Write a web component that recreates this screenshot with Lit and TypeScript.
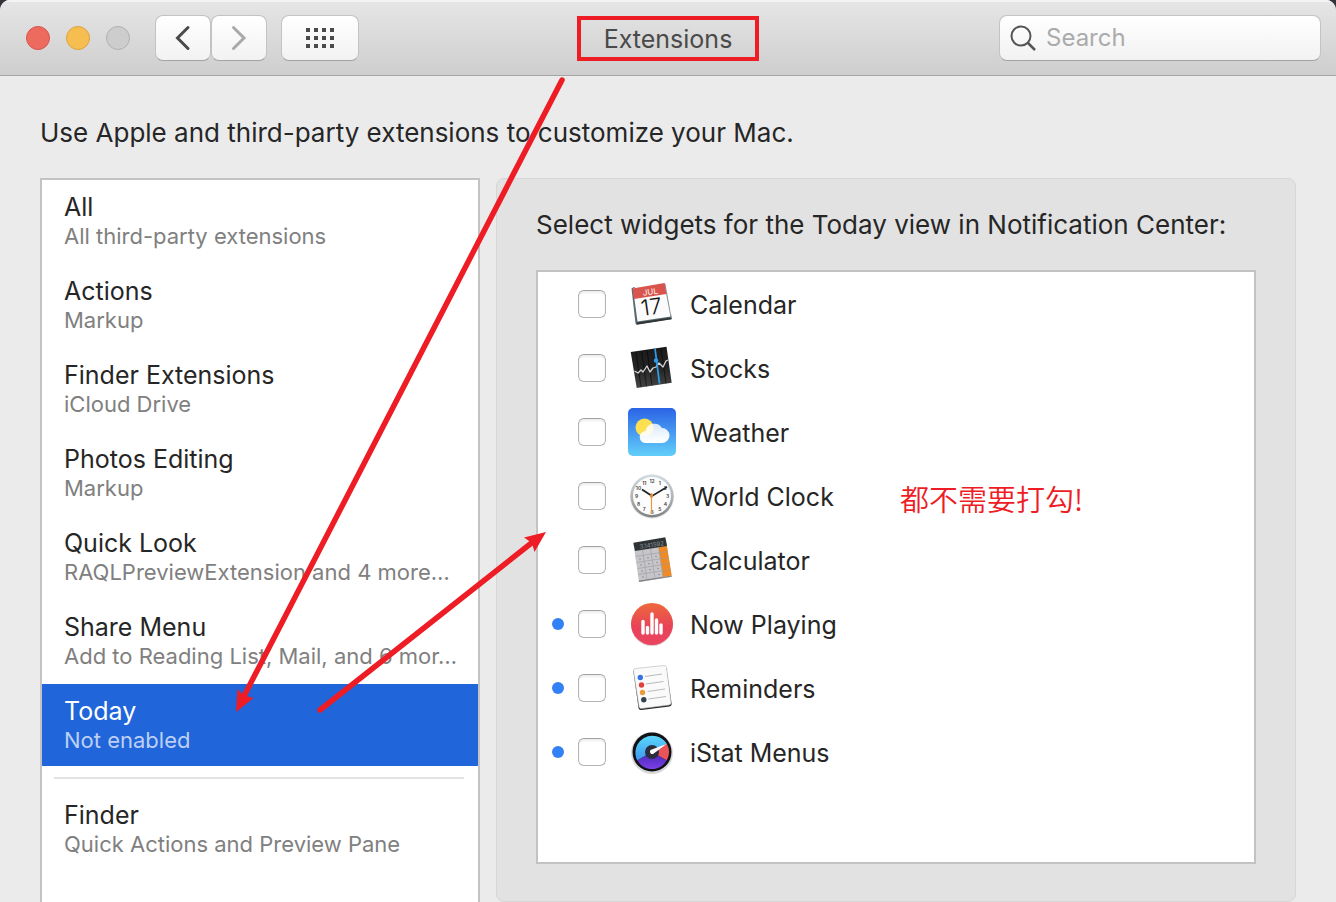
import { LitElement, html, css, svg, nothing } from "lit";
import { customElement, property, state } from "lit/decorators.js";
import { classMap } from "lit/directives/class-map.js";

interface Category {
  title: string;
  detail: string;
}

interface Widget {
  id: string;
  label: string;
  isNew?: boolean;
}

const CATEGORIES: Category[] = [
  { title: "All", detail: "All third-party extensions" },
  { title: "Actions", detail: "Markup" },
  { title: "Finder Extensions", detail: "iCloud Drive" },
  { title: "Photos Editing", detail: "Markup" },
  { title: "Quick Look", detail: "RAQLPreviewExtension and 4 more…" },
  { title: "Share Menu", detail: "Add to Reading List, Mail, and 6 mor…" },
  { title: "Today", detail: "Not enabled" },
];

const FINDER: Category = { title: "Finder", detail: "Quick Actions and Preview Pane" };

const WIDGETS: Widget[] = [
  { id: "calendar", label: "Calendar" },
  { id: "stocks", label: "Stocks" },
  { id: "weather", label: "Weather" },
  { id: "clock", label: "World Clock" },
  { id: "calculator", label: "Calculator" },
  { id: "playing", label: "Now Playing", isNew: true },
  { id: "reminders", label: "Reminders", isNew: true },
  { id: "istat", label: "iStat Menus", isNew: true },
];

const polar = (radius: number, hour: number) => {
  const angle = (hour * Math.PI) / 6;
  return { x: 24 + radius * Math.sin(angle), y: 24 - radius * Math.cos(angle) };
};

const ICONS: Record<string, unknown> = {
  calendar: svg`
    <path d="M3.500 8.500 L6 7 L43 34 L43.800 39 L8.500 44.500 L7.500 43.500 Z" fill="#5a6970"/>
    <path d="M9 42.500 L43 37.500 L43.800 39.200 L8.500 44.700 Z" fill="#2f3537"/>
    <path d="M5 8.500 L36 3 L42.800 36.500 L9.500 41.500 Z" fill="#fbfbfb"/>
    <path d="M36 3 L37.500 4 L43.800 39 L42.500 37 Z" fill="#8b979d"/>
    <path d="M4.500 8.500 L36.500 3 L38.500 14 L6 19 Z" fill="#d9544d"/>
    <g transform="rotate(-8 24 24)">
      <text x="24" y="14.500" class="t-month">JUL</text>
      <text x="23" y="34.500" class="t-day">17</text>
    </g>`,
  stocks: svg`
    <defs>
      <linearGradient id="slate" x1="0" y1="0" x2="0" y2="1">
        <stop offset="0" stop-color="#1a1a1b"/><stop offset=".5" stop-color="#232324"/>
        <stop offset="1" stop-color="#454546"/>
      </linearGradient>
    </defs>
    <path d="M2.700 8 L38.500 2.700 L43.700 38.700 L8.700 44 Z" fill="url(#slate)"/>
    <g stroke="#000" stroke-width="1" stroke-opacity=".55">
      <path d="M8 8 L13 43"/><path d="M13.500 7 L18.500 42.500"/>
      <path d="M19 6 L24 41.500"/><path d="M33 4 L38 39.500"/>
    </g>
    <path d="M6.500 27 L10 29 L13 26 L15 28 L19 22 L22 28 L25 24 L28 23 L31 19 L35 23 L38 17 L40 16"
      fill="none" stroke="#d5d5d5" stroke-width="1.300" stroke-linejoin="round"/>
    <path d="M27 4.500 L31.500 39.500" stroke="#2b9de8" stroke-width="1.800"/>
    <circle cx="28" cy="16.500" r="2.200" fill="#2b9de8"/>`,
  weather: svg`
    <defs>
      <linearGradient id="sky" x1="0" y1="0" x2="0" y2="1">
        <stop offset="0" stop-color="#2b63e6"/><stop offset="1" stop-color="#62cffa"/>
      </linearGradient>
      <linearGradient id="cloud" x1="0" y1="0" x2="0" y2="1">
        <stop offset="0" stop-color="#fff" stop-opacity=".8"/><stop offset="1" stop-color="#fff"/>
      </linearGradient>
    </defs>
    <rect width="48" height="48" rx="5" fill="url(#sky)"/>
    <circle cx="16.500" cy="19.500" r="9" fill="#fddf52"/>
    <path d="M17 35 a6 6 0 0 1 -2 -11.300 a4.500 4.500 0 0 1 2.500 -.7 a9 9 0 0 1 16.500 -3
      a7.500 7.500 0 0 1 0 15 Z" fill="url(#cloud)"/>`,
  clock: svg`
    <defs>
      <linearGradient id="rim" x1="0" y1="0" x2="0" y2="1">
        <stop offset="0" stop-color="#cfdde3"/><stop offset=".5" stop-color="#b3b5b7"/>
        <stop offset="1" stop-color="#7e8184"/>
      </linearGradient>
    </defs>
    <circle cx="24" cy="24.500" r="22" fill="#dedede"/>
    <circle cx="24" cy="24" r="21.500" fill="url(#rim)"/>
    <circle cx="24" cy="24" r="19" fill="#fcfcfc"/>
    ${[1, 2, 3, 4, 5, 6, 7, 8, 9, 10, 11, 12].map((hour) => {
      const at = polar(15.5, hour);
      return svg`<text x=${at.x} y=${at.y + 2} class="t-hour">${hour}</text>`;
    })}
    <path d="M24 24 L14 17.500" stroke="#222" stroke-width="1.900"/>
    <path d="M24 24 L39 15" stroke="#222" stroke-width="1.500"/>
    <path d="M23.500 21 L23.500 42" stroke="#ea9a3c" stroke-width="1.200"/>
    <circle cx="23.500" cy="24" r="1.700" fill="#e48a2c"/>`,
  calculator: svg`
    <path d="M5.500 8 L38 3 L43.700 40.700 L11 46 Z" fill="#c6c6ca"/>
    <path d="M10.800 44.500 L43.500 39.500 L43.700 40.700 L11 46 Z" fill="#85858a"/>
    <path d="M30.500 11 L38.800 9.800 L43.700 39.500 L35 41 Z" fill="#f08a24"/>
    <path d="M5.300 6.700 L37.300 1.300 L39 10 L7 15 Z" fill="#2e3336"/>
    <text x="24" y="11" class="t-lcd" transform="rotate(-8 24 11)">3.141592</text>
    <g stroke="#9a9a9f" stroke-width=".6">
      <path d="M14.500 14 L19 44"/><path d="M22.500 12.500 L27 42.500"/><path d="M30.500 11 L35 41"/>
      <path d="M7.500 20.500 L40 15.500"/><path d="M8.500 26.500 L41 21.500"/>
      <path d="M9.500 32.500 L42 27.500"/><path d="M10.200 38.500 L43 33.500"/>
    </g>
    <g fill="#8d8d92">
      <circle cx="12" cy="23" r=".8"/><circle cx="20" cy="21.800" r=".8"/><circle cx="28" cy="20.500" r=".8"/>
      <circle cx="13" cy="29" r=".8"/><circle cx="21" cy="27.800" r=".8"/><circle cx="29" cy="26.500" r=".8"/>
      <circle cx="14" cy="35" r=".8"/><circle cx="22" cy="33.800" r=".8"/><circle cx="30" cy="32.500" r=".8"/>
      <circle cx="15" cy="41" r=".8"/><circle cx="31" cy="38.500" r=".8"/>
    </g>`,
  playing: svg`
    <defs>
      <linearGradient id="coral" x1="0" y1="0" x2="0" y2="1">
        <stop offset="0" stop-color="#ec693c"/><stop offset=".6" stop-color="#e9415a"/>
        <stop offset="1" stop-color="#ea4560"/>
      </linearGradient>
    </defs>
    <circle cx="24" cy="25" r="21" fill="#dcc9cb"/>
    <circle cx="24" cy="24" r="21" fill="url(#coral)"/>
    <g stroke="#fff" stroke-width="3.400" stroke-linecap="round">
      <path d="M15 21.500 V33"/><path d="M19.500 27.500 V33"/><path d="M24 14 V33"/>
      <path d="M28.500 20 V33"/><path d="M33 25 V33"/>
    </g>`,
  reminders: svg`
    <path d="M5.500 8 Q5 6 7.500 5.500 L36 2.500 Q38 2.500 38.500 4.500 L43.500 39 Q44 42 41.500 42.500
      L13.500 46 Q11 46.500 10.500 44 Z" fill="#2a2a2b"/>
    <path d="M5.500 7 Q5 5 7.500 4.500 L36 1.500 Q38 1.500 38.500 3.500 L43 38 Q43.400 40.500 41 41
      L13.500 44.500 Q11.500 45 11 42.500 Z" fill="#fafafa" stroke="#b5b5b5" stroke-width=".6"/>
    <g stroke="#aaa" stroke-width=".8">
      <path d="M17 12.500 L34 10"/><path d="M18 20 L35.500 17.500"/>
      <path d="M19.500 27.500 L37 25"/><path d="M20.500 35 L38 32.500"/>
    </g>
    <circle cx="12.300" cy="13.500" r="2.700" fill="#3472e8"/>
    <circle cx="13.500" cy="21" r="2.700" fill="#e2413a"/>
    <circle cx="14.500" cy="28.500" r="2.700" fill="#eb9a3d"/>
    <circle cx="15.800" cy="35.800" r="2.700" fill="#33424f"/>`,
  istat: svg`
    <defs>
      <linearGradient id="violet" x1="0" y1="0" x2="0" y2="1">
        <stop offset="0" stop-color="#4527b5"/><stop offset="1" stop-color="#7c3fe6"/>
      </linearGradient>
      <linearGradient id="aqua" x1="0" y1="0" x2="0" y2="1">
        <stop offset="0" stop-color="#5bd6fb"/><stop offset="1" stop-color="#3d97ee"/>
      </linearGradient>
    </defs>
    <circle cx="24" cy="25" r="21" fill="#d9d9dc"/>
    <circle cx="24" cy="24" r="19.500" fill="#101114"/>
    <path d="M24 24 L9.300 32.500 A17 17 0 0 1 38.700 15.500 Z" fill="url(#aqua)"/>
    <path d="M24 24 L38.700 15.500 A17 17 0 0 1 38.700 32.500 Z" fill="#e8545a"/>
    <path d="M24 24 L38.700 32.500 A17 17 0 0 1 9.300 32.500 Z" fill="url(#violet)"/>
    <circle cx="24" cy="24" r="7" fill="#2b2d3a"/>
    <path d="M22.500 22 L39 15.800 L25 26 A2.500 2.500 0 0 1 22.500 22 Z" fill="#fff"/>`,
};

@customElement("category-item")
class CategoryItem extends LitElement {
  @property() heading = "";
  @property() detail = "";
  @property({ type: Boolean }) selected = false;

  static styles = css`
    :host {
      display: block;
    }
    .item {
      display: block;
      box-sizing: border-box;
      width: 100%;
      padding: 12px 16px 12px 22px;
      border: 0;
      background: none;
      color: #262626;
      font-family: inherit;
      text-align: left;
    }
    .heading,
    .detail {
      display: block;
      white-space: nowrap;
    }
    .heading {
      font-size: 25px;
      line-height: 30px;
    }
    .detail {
      font-size: 22px;
      line-height: 28px;
      color: #808080;
    }
    .selected {
      background: #2165da;
      color: #fff;
    }
    .selected .detail {
      color: #bdd0f4;
    }
  `;

  render() {
    return html`<button
      type="button"
      class=${classMap({ item: true, selected: this.selected })}
      aria-pressed=${this.selected ? "true" : "false"}
    >
      <span class="heading">${this.heading}</span>
      <span class="detail">${this.detail}</span>
    </button>`;
  }
}

@customElement("widget-row")
class WidgetRow extends LitElement {
  @property({ attribute: false }) widget!: Widget;

  static styles = css`
    :host {
      display: block;
    }
    .row {
      display: flex;
      align-items: center;
      height: 64px;
      padding-left: 14px;
    }
    .dot {
      width: 12px;
      height: 12px;
      margin-right: 14px;
      border-radius: 50%;
    }
    .new {
      background: #3381f7;
    }
    .box {
      appearance: none;
      width: 28px;
      height: 28px;
      margin: 0 22px 0 0;
      border: 1px solid #b4b4b4;
      border-top-color: #a2a2a2;
      border-radius: 6px;
      background: #fff;
      box-shadow: inset 0 2px 2px #eee;
    }
    .box:checked {
      background: #3381f7;
    }
    .icon {
      width: 48px;
      height: 48px;
      margin-right: 14px;
    }
    .name {
      padding-top: 2px;
      font-size: 25px;
      line-height: 34px;
    }
    .t-month,
    .t-day,
    .t-hour,
    .t-lcd {
      font-family: Inter, sans-serif;
      text-anchor: middle;
    }
    .t-month {
      font-size: 8px;
      fill: #fff;
    }
    .t-day {
      font-size: 22px;
      font-weight: 300;
      fill: #111;
    }
    .t-hour {
      font-size: 5px;
      font-weight: 600;
      fill: #444;
    }
    .t-lcd {
      font-size: 6px;
      fill: #8c9296;
    }
  `;

  render() {
    const { id, label, isNew } = this.widget;
    return html`<label class="row" for=${id}>
      <span class=${classMap({ dot: true, new: !!isNew })}></span>
      <input class="box" type="checkbox" id=${id} />
      <svg class="icon" viewBox="0 0 48 48" aria-hidden="true">${ICONS[id] ?? nothing}</svg>
      <span class="name">${label}</span>
    </label>`;
  }
}

@customElement("app-root")
class AppRoot extends LitElement {
  @state() private current = "Today";

  static styles = css`
    :host {
      display: block;
      background: #33343a;
      color: #262626;
      font-family: Inter, "Noto Sans CJK SC", sans-serif;
    }
    .window {
      position: relative;
      display: flex;
      flex-direction: column;
      height: 100vh;
      overflow: hidden;
      border-radius: 10px 10px 0 0;
      background: #ebebeb;
    }
    .toolbar {
      display: grid;
      grid-template-columns: 1fr auto 1fr;
      align-items: center;
      box-sizing: border-box;
      height: 76px;
      padding: 0 15px;
      border-bottom: 1px solid #a5a5a5;
      background: linear-gradient(#e6e6e6, #cecece);
      box-shadow: inset 0 2px 0 #f3f3f3;
    }
    .left {
      display: flex;
      align-items: center;
      padding-left: 11px;
    }
    .lights {
      display: flex;
      gap: 16px;
      margin-right: 25px;
    }
    .light {
      box-sizing: border-box;
      width: 24px;
      height: 24px;
      padding: 0;
      border: 1px solid #b0b0b0;
      border-radius: 50%;
      background: #cdcdcd;
    }
    .close {
      border-color: #d9544b;
      background: #ed6a5f;
    }
    .minimize {
      border-color: #dca33c;
      background: #f6be50;
    }
    .tool {
      display: flex;
      align-items: center;
      justify-content: center;
      box-sizing: border-box;
      width: 56px;
      height: 46px;
      padding: 0;
      border: 1px solid #c3c3c3;
      border-bottom-color: #a3a3a3;
      border-radius: 8px;
      background: linear-gradient(#fff, #f2f2f2);
    }
    .grid {
      width: 78px;
      margin-left: 14px;
    }
    .title {
      box-sizing: border-box;
      margin: 2px 0 0;
      padding: 2px 23px 0;
      border: 4px solid #ee1c25;
      font-size: 25px;
      font-weight: 400;
      line-height: 35px;
      color: #4a4a4a;
    }
    .search {
      display: flex;
      align-items: center;
      justify-self: end;
      box-sizing: border-box;
      width: 322px;
      height: 46px;
      padding: 0 10px;
      gap: 10px;
      border: 1px solid #c3c3c3;
      border-bottom-color: #a3a3a3;
      border-radius: 8px;
      background: linear-gradient(#fff, #f2f2f2);
    }
    .query {
      flex: 1;
      min-width: 0;
      padding: 0;
      border: 0;
      outline: 0;
      background: none;
      font-family: inherit;
      font-size: 24px;
      line-height: 34px;
      color: #262626;
    }
    .query::placeholder {
      color: #ababab;
      opacity: 1;
    }
    .content {
      display: flex;
      flex: 1;
      flex-direction: column;
      min-height: 0;
      padding: 40px 40px 0;
    }
    .intro,
    .prompt {
      margin: 0 0 28px;
      font-size: 26px;
      font-weight: 400;
      line-height: 34px;
      white-space: nowrap;
    }
    .columns {
      display: grid;
      grid-template-columns: 440px 1fr;
      flex: 1;
      gap: 16px;
      min-height: 0;
    }
    .categories {
      display: flex;
      flex-direction: column;
      gap: 2px;
      border: 2px solid #c3c3c3;
      border-bottom: 0;
      background: #fff;
    }
    .rule {
      height: 2px;
      margin: 9px 14px 7px 12px;
      border: 0;
      background: #e3e3e3;
    }
    .panel {
      display: flex;
      flex-direction: column;
      padding: 29px 39px 37px;
      border: 1px solid #d6d6d6;
      border-radius: 8px;
      background: #e2e2e2;
    }
    .widgets {
      flex: 1;
      border: 2px solid #c3c3c3;
      background: #fff;
    }
    .arrows {
      position: absolute;
      top: 0;
      left: 0;
      width: 1336px;
      height: 902px;
      pointer-events: none;
    }
    .note {
      position: absolute;
      top: 478px;
      left: 900px;
      margin: 0;
      font-family: "Noto Sans CJK SC", sans-serif;
      font-size: 29px;
      font-weight: 350;
      line-height: 40px;
      color: #ee1c25;
    }
  `;

  private renderCategory({ title, detail }: Category) {
    return html`<category-item
      .heading=${title}
      .detail=${detail}
      ?selected=${this.current === title}
      @click=${() => (this.current = title)}
    ></category-item>`;
  }

  render() {
    return html`<div class="window">
      <header class="toolbar">
        <div class="left">
          <div class="lights">
            <button type="button" class="light close" aria-label="Close"></button>
            <button type="button" class="light minimize" aria-label="Minimize"></button>
            <button type="button" class="light" aria-label="Zoom" disabled></button>
          </div>
          <button type="button" class="tool" aria-label="Back">
            <svg width="16" height="26" viewBox="0 0 16 26" fill="none">
              <path d="M13 2.500 L2.500 13 L13 23.500" stroke="#4a4a4a" stroke-width="3" stroke-linecap="round" />
            </svg>
          </button>
          <button type="button" class="tool" aria-label="Forward">
            <svg width="16" height="26" viewBox="0 0 16 26" fill="none">
              <path d="M2.500 2.500 L13 13 L2.500 23.500" stroke="#a9a9a9" stroke-width="3" stroke-linecap="round" />
            </svg>
          </button>
          <button type="button" class="tool grid" aria-label="Show All">
            <svg width="28" height="20" viewBox="0 0 28 20" fill="#4a4a4a">
              ${[0, 8, 16].map((y) => [0, 8, 16, 24].map((x) => svg`<rect x=${x} y=${y} width="4" height="4" />`))}
            </svg>
          </button>
        </div>
        <h1 class="title">Extensions</h1>
        <label class="search">
          <svg width="26" height="26" viewBox="0 0 26 26" fill="none" stroke="#555" stroke-width="2">
            <circle cx="11" cy="11" r="9.500" />
            <path d="M17.500 17.500 L25 25" stroke-width="2.500" />
          </svg>
          <input class="query" type="text" placeholder="Search" aria-label="Search" />
        </label>
      </header>
      <main class="content">
        <p class="intro">Use Apple and third-party extensions to customize your Mac.</p>
        <div class="columns">
          <nav class="categories">
            ${CATEGORIES.map((category) => this.renderCategory(category))}
            <hr class="rule" />
            ${this.renderCategory(FINDER)}
          </nav>
          <section class="panel">
            <h2 class="prompt">Select widgets for the Today view in Notification Center:</h2>
            <div class="widgets">
              ${WIDGETS.map((widget) => html`<widget-row .widget=${widget}></widget-row>`)}
            </div>
          </section>
        </div>
      </main>
      <svg class="arrows" viewBox="0 0 1336 902" aria-hidden="true">
        <g stroke="#ee1c25" stroke-width="5.500" stroke-linecap="round">
          <path d="M562 80 L243 698" />
          <path d="M320 710 L534 541" />
        </g>
        <g fill="#ee1c25">
          <path d="M236 712 L237.500 689 L243 695 L253.500 698 Z" />
          <path d="M546 532 L534.500 552 L532 543 L524 537.500 Z" />
        </g>
      </svg>
      <p class="note">都不需要打勾!</p>
    </div>`;
  }
}
